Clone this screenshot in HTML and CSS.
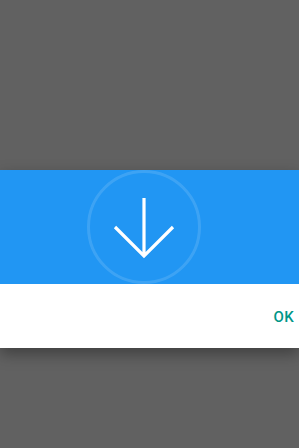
FILE: index.html
```html
<!DOCTYPE html>
<html>
<head>
<meta charset="utf-8">
<link rel="stylesheet" href="styles.css">
</head>
<body>
<div class="screen">
  <div class="dialog">
    <div class="header">
      <svg class="icon" width="116" height="116" viewBox="0 0 116 116">
        <circle cx="58" cy="58" r="55.5" fill="none" stroke="rgba(255,255,255,0.13)" stroke-width="3"/>
        <path d="M58 29 V87 M29 58 L58 87 L87 58" fill="none" stroke="#fff" stroke-width="3.2" stroke-linecap="butt" stroke-linejoin="miter"/>
      </svg>
    </div>
    <div class="footer">
      <span class="ok">OK</span>
    </div>
  </div>
</div>
</body>
</html>
```
FILE: styles.css
```css
html, body {
  margin: 0;
  padding: 0;
}
body {
  background: #616161;
  font-family: Roboto, "Liberation Sans", sans-serif;
}
.screen {
  width: 299px;
  height: 448px;
  padding-top: 170px;
  box-sizing: border-box;
}
.dialog {
  box-shadow: 0 6px 14px rgba(0,0,0,0.35);
}
.header {
  height: 114px;
  background: #2196f3;
  display: flex;
  justify-content: center;
  align-items: flex-start;
  overflow: hidden;
}
.icon {
  display: block;
  margin-top: -1px;
  margin-left: -11px;
}
.footer {
  height: 64px;
  background: #fff;
  display: flex;
  justify-content: flex-end;
  align-items: center;
  padding-right: 5px;
}
.ok {
  color: #009688;
  font-weight: 500;
  font-size: 15px;
  letter-spacing: 0.3px;
  padding-top: 2px;
}
```
